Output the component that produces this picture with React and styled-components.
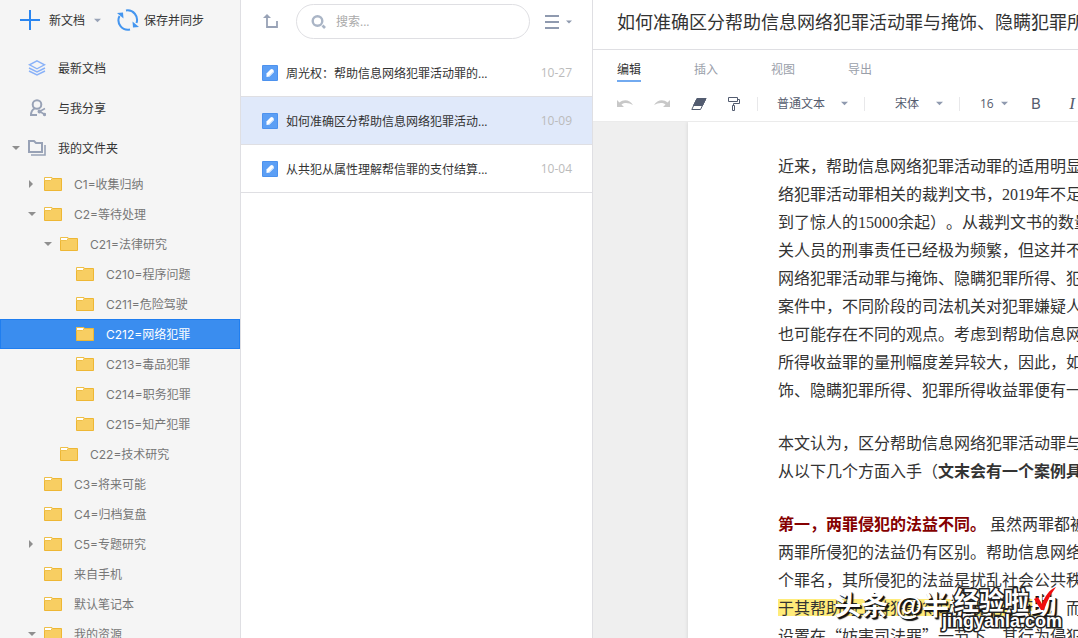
import { useState } from "react";
import styled, { createGlobalStyle } from "styled-components";

const GlobalStyle = createGlobalStyle`
    * {
        box-sizing: border-box;
    }

    body {
        margin: 0;
        color: #333;
        font-family: "Open Sans", "Noto Sans CJK SC", sans-serif;
        font-size: 12px;
    }

    button, input, select {
        margin: 0;
        padding: 0;
        border: none;
        background: none;
        color: inherit;
        font: inherit;
    }

    button {
        cursor: pointer;
    }

    svg {
        display: block;
        flex: none;
    }
`

const AppStyle = styled.div`
    display: grid;
    grid-template-columns: 240px 353px minmax(0, 1fr);
    height: 100vh;
    overflow: hidden;
`

const Sidebar = styled.aside`
    background: #f5f5f5;
    overflow: hidden;
`

const SideActions = styled.div`
    display: flex;
    align-items: center;
    gap: 16px;
    height: 40px;
    margin-bottom: 8px;
    padding-left: 20px;
`

const ActionButton = styled.button`
    display: flex;
    align-items: center;
    gap: ${({ $gap }) => $gap}px;
    white-space: nowrap;
`

const NavButton = styled.button`
    display: flex;
    align-items: center;
    width: 100%;
    height: 40px;
    padding-left: 12px;

    svg + span, span + span {
        margin-left: 12px;
    }
`

const CaretSlot = styled.span`
    display: flex;
    flex: none;
    width: 16px;
`

const Tree = styled.div`
    padding-top: 1px;
    font-family: Inter, "Noto Sans CJK SC", sans-serif;
`

const TreeButton = styled.button`
    display: flex;
    align-items: center;
    width: 100%;
    height: 30px;
    padding-left: ${({ $depth }) => 11 + $depth * 16}px;
    border: 1px solid ${({ $active }) => ($active ? "#1f7ef0" : "transparent")};
    background: ${({ $active }) => ($active ? "#3a8def" : "transparent")};
    color: ${({ $active }) => ($active ? "#fff" : "#777")};

    svg + span {
        margin-left: 12px;
        padding-bottom: 2px;
    }
`

const NotesPanel = styled.section`
    border-left: 1px solid #dfdfe3;
    border-right: 1px solid #dfdfe3;
    background: #fff;
`

const NotesHeader = styled.div`
    display: flex;
    align-items: center;
    height: 49px;
    padding: 0 20px 6px 22px;
`

const IconButton = styled.button`
    display: flex;
    align-items: center;
    gap: 7px;
`

const SearchBox = styled.label`
    display: flex;
    flex: 1;
    align-items: center;
    gap: 10px;
    height: 35px;
    margin: 0 15px 0 18px;
    padding: 0 14px;
    border: 1px solid #dfdfe3;
    border-radius: 18px;

    input {
        flex: 1;
        min-width: 0;
        outline: none;
    }

    input::placeholder {
        color: #aaa;
        opacity: 1;
    }
`

const NoteButton = styled.button`
    display: flex;
    align-items: center;
    width: 100%;
    height: 48px;
    padding: 0 20px 0 21px;
    border-bottom: 1px solid #dfdfe3;
    background: ${({ $active }) => ($active ? "#e0e9fa" : "#fff")};

    .note__title {
        flex: 1;
        margin-left: 8px;
        text-align: left;
        white-space: nowrap;
    }

    .note__date {
        color: #bbb;
    }
`

const Editor = styled.main`
    position: relative;
    display: flex;
    flex-direction: column;
    min-width: 0;
    overflow: hidden;
`

const DocTitle = styled.h1`
    flex: none;
    height: 50px;
    margin: 0;
    padding-left: 24px;
    border-bottom: 1px solid #dfdfe3;
    font-size: 18px;
    font-weight: 400;
    line-height: 44px;
    white-space: nowrap;
    overflow: hidden;
`

const Tabs = styled.div`
    display: flex;
    flex: none;
    gap: 53px;
    height: 36px;
    padding: 8px 0 4px 24px;
`

const Tab = styled.button`
    height: 24px;
    border-bottom: 2px solid ${({ $active }) => ($active ? "#72aaf0" : "transparent")};
    color: ${({ $active }) => ($active ? "#333" : "#9aa0aa")};
    white-space: nowrap;
`

const Toolbar = styled.div`
    display: flex;
    flex: none;
    align-items: center;
    height: 36px;
    padding-left: 24px;
    border-bottom: 1px solid #ebebeb;
    color: #555c6e;
`

const ToolGroup = styled.div`
    display: flex;
    flex: none;
    align-items: center;
    gap: 21px;
    margin-right: 16px;
`

const Divider = styled.span`
    flex: none;
    width: 1px;
    height: 14px;
    background: #e8e8ea;
`

const SelectBox = styled.label`
    display: flex;
    flex: none;
    align-items: center;
    margin: 0 ${({ $right = 16 }) => $right}px 0 ${({ $left }) => $left}px;

    select {
        width: ${({ $width }) => $width}px;
        appearance: none;
        outline: none;
    }
`

const FormatButton = styled.button`
    flex: none;
    width: 36px;
    font-family: ${({ $italic }) => ($italic ? '"Liberation Serif", serif' : "Inter, sans-serif")};
    font-size: ${({ $italic }) => ($italic ? 17 : 15)}px;
    font-style: ${({ $italic }) => ($italic ? "italic" : "normal")};
`

const Canvas = styled.div`
    flex: 1;
    padding-left: 95px;
    background: #efefef;
    overflow: hidden;
`

const Paper = styled.article`
    min-height: 100%;
    padding: 29px 0 0 90px;
    background: #fff;
    box-shadow: 0 0 4px rgba(0, 0, 0, 0.12);
    font-family: "Noto Sans CJK SC", sans-serif;
    font-size: 16px;
    line-height: 28px;
    white-space: nowrap;
    text-spacing-trim: space-all;

    p {
        margin: 0 0 25px;
    }

    mark {
        background: linear-gradient(#ffec7a, #ffec7a) center / 100% 17px no-repeat;
        color: inherit;
    }
`

const Digits = styled.span`
    font-family: "Liberation Serif", serif;
    line-height: 1;
`

const Heading = styled.strong`
    margin-right: 4px;
    color: #850000;
`

const Watermark = styled.div`
    position: absolute;
    right: ${({ $right }) => $right}px;
    bottom: ${({ $bottom }) => $bottom}px;
    color: #fff;
    font-family: "Liberation Sans", "Noto Sans CJK SC", sans-serif;
    font-size: ${({ $size }) => $size}px;
    font-weight: 700;
    line-height: 1;
    white-space: nowrap;
    pointer-events: none;
    -webkit-text-stroke: ${({ $shadow }) => ($shadow ? 0 : 3)}px #222;
    paint-order: stroke fill;
    text-shadow: ${({ $shadow }) => ($shadow ? "2px 2px 1px #111, 1px 1px 0 #111" : "none")};
`

const CheckMark = styled.svg`
    position: absolute;
    right: 21px;
    bottom: 27px;
`

const Caret = ({ color = "#8f8f8f", right, size = 8 }) => (
    <svg width={size} height={size} viewBox="0 0 8 8">
        <path d={right ? "M1 0L5 4L1 8Z" : "M0 2H8L4 6Z"} fill={color} />
    </svg>
)

const PlusIcon = () => (
    <svg width="20" height="20" viewBox="0 0 20 20">
        <path d="M10 0V20M0 10H20" stroke="#2b86f0" strokeWidth="2" />
    </svg>
)

const SyncIcon = () => (
    <svg width="22" height="22" viewBox="0 0 22 22" fill="none" stroke="#4596ef" strokeWidth="2">
        <path d="M9 1.5A9.5 9.5 0 0 1 19.5 14" />
        <path d="M2.5 7A9.5 9.5 0 0 0 13 20.5" />
        <path d="M0 4L6 3.500L6.500 9.500Z" fill="#4596ef" stroke="none" />
        <path d="M22 18L16 18.500L15.500 12.500Z" fill="#4596ef" stroke="none" />
    </svg>
)

const LayersIcon = () => (
    <svg width="18" height="16" viewBox="0 0 18 16" fill="none" stroke="#8ab2f8" strokeWidth="1.4">
        <path d="M9 0.800L16.500 4.800L9 8.800L1.500 4.800Z" />
        <path d="M1 8L9 12L17 8M1 11L9 15L17 11" />
    </svg>
)

const ShareIcon = () => (
    <svg width="18" height="18" viewBox="0 0 18 18" fill="none" stroke="#98a2b6" strokeWidth="2">
        <circle cx="9" cy="5.500" r="4.300" />
        <path d="M6.500 9.500C4 11 3 13 3 16H9" />
        <path d="M17 9.500L11.500 12.500L17 15.500" strokeWidth="1.5" />
        <circle cx="11.500" cy="12.500" r="1" />
        <circle cx="16.500" cy="15.500" r="0.700" />
    </svg>
)

const FoldersIcon = () => (
    <svg width="18" height="16" viewBox="0 0 18 16" fill="none" stroke="#98a2b6">
        <path d="M1 1H6L8 3H14V12H1Z" strokeWidth="2" />
        <path d="M17 5V15H3" strokeWidth="1.600" />
    </svg>
)

const FolderIcon = () => (
    <svg width="18" height="14" viewBox="0 0 18 14">
        <path d="M0.500 1.500H7.500L8.500 1.500H17.500V13.500H0.500Z" fill="#f8ce62" stroke="#eeb734" />
        <path d="M0.500 0.500H8V2L6.500 3.500H0.500Z" fill="#fff" stroke="#eec04a" />
    </svg>
)

const UpIcon = () => (
    <svg width="15" height="15" viewBox="0 0 15 15" fill="none" stroke="#98a2b6" strokeWidth="1.800">
        <path d="M4 2V13H14V7" />
        <path d="M0 4L4 0L8 4Z" fill="#98a2b6" stroke="none" />
    </svg>
)

const SearchIcon = () => (
    <svg width="15" height="14" viewBox="0 0 15 14" fill="none" stroke="#aab5c6">
        <circle cx="6.500" cy="6" r="4.800" strokeWidth="2.400" />
        <path d="M11.500 10.500L14 13" strokeWidth="2.600" />
    </svg>
)

const MenuIcon = () => (
    <svg width="14" height="14" viewBox="0 0 14 14" stroke="#8f9aaf" strokeWidth="2">
        <path d="M0 1H14M0 7H14M0 13H14" />
    </svg>
)

const NoteIcon = () => (
    <svg width="16" height="16" viewBox="0 0 16 16">
        <rect width="16" height="16" rx="1" fill="#4d92ee" />
        <rect x="1" y="1" width="14" height="14" fill="#5c9ff5" />
        <path d="M4.500 12L4.500 8.500L8.500 4.500Q9.500 3.500 11 4.500Q12.500 6 11.500 7.500L7.500 11.500Z" fill="#fff" />
        <path d="M7.500 11.500L11.500 7.500L11.500 6L6 11.700Z" fill="#c9e0fc" />
    </svg>
)

const UndoIcon = ({ flip }) => (
    <svg width="16" height="9" viewBox="0 0 16 9">
        <path
            d="M0 1V8H7L4.500 5.500C8 3 12 4 16 6C13 1 7 -0.500 2.500 3.500Z"
            fill="#c8c8c8"
            transform={flip ? "translate(16 0) scale(-1 1)" : undefined}
        />
    </svg>
)

const EraserIcon = () => (
    <svg width="16" height="12" viewBox="0 0 16 12" stroke="#535c70">
        <path d="M6 0.500H15L9.500 11.500H0.800Z" fill="#fff" />
        <path d="M6 0.500H15L11.500 7.500H2.500Z" fill="#535c70" />
    </svg>
)

const RollerIcon = () => (
    <svg width="13" height="14" viewBox="0 0 13 14" fill="none" stroke="#535c70">
        <path d="M0.500 0.500H9.500V4.500H0.500Z" />
        <path d="M9.500 2.500H11.500V6.500H5.500V8" />
        <path d="M4.500 8.500H6.500V13.500H4.500Z" />
    </svg>
)

const folders = [
    { name: "C1=收集归纳", depth: 1, caret: "right" },
    { name: "C2=等待处理", depth: 1, caret: "down" },
    { name: "C21=法律研究", depth: 2, caret: "down" },
    { name: "C210=程序问题", depth: 3 },
    { name: "C211=危险驾驶", depth: 3 },
    { name: "C212=网络犯罪", depth: 3 },
    { name: "C213=毒品犯罪", depth: 3 },
    { name: "C214=职务犯罪", depth: 3 },
    { name: "C215=知产犯罪", depth: 3 },
    { name: "C22=技术研究", depth: 2 },
    { name: "C3=将来可能", depth: 1 },
    { name: "C4=归档复盘", depth: 1 },
    { name: "C5=专题研究", depth: 1, caret: "right" },
    { name: "来自手机", depth: 1 },
    { name: "默认笔记本", depth: 1 },
    { name: "我的资源", depth: 1, caret: "down" },
]

const notes = [
    { title: "周光权：帮助信息网络犯罪活动罪的...", date: "10-27" },
    { title: "如何准确区分帮助信息网络犯罪活动...", date: "10-09" },
    { title: "从共犯从属性理解帮信罪的支付结算...", date: "10-04" },
]

const tabs = ["编辑", "插入", "视图", "导出"]

const App = () => {

    const [folder, setFolder] = useState("C212=网络犯罪")
    const [note, setNote] = useState(1)
    const [tab, setTab] = useState("编辑")

    return (
        <AppStyle>
            <GlobalStyle />

            <Sidebar>
                <SideActions>
                    <ActionButton $gap={9}>
                        <PlusIcon />
                        新文档
                        <Caret color="#98a2b6" size={7} />
                    </ActionButton>
                    <ActionButton $gap={5}>
                        <SyncIcon />
                        保存并同步
                    </ActionButton>
                </SideActions>

                <nav>
                    <NavButton><CaretSlot /><LayersIcon /><span>最新文档</span></NavButton>
                    <NavButton><CaretSlot /><ShareIcon /><span>与我分享</span></NavButton>
                    <NavButton><CaretSlot><Caret /></CaretSlot><FoldersIcon /><span>我的文件夹</span></NavButton>
                    <Tree>
                        {folders.map((item) => (
                            <TreeButton
                                key={item.name}
                                $depth={item.depth}
                                $active={item.name === folder}
                                onClick={() => setFolder(item.name)}
                            >
                                <CaretSlot>{item.caret ? <Caret right={item.caret === "right"} /> : null}</CaretSlot>
                                <FolderIcon />
                                <span>{item.name}</span>
                            </TreeButton>
                        ))}
                    </Tree>
                </nav>
            </Sidebar>

            <NotesPanel>
                <NotesHeader>
                    <IconButton aria-label="返回上级"><UpIcon /></IconButton>
                    <SearchBox>
                        <SearchIcon />
                        <input type="text" aria-label="搜索" placeholder="搜索..." />
                    </SearchBox>
                    <IconButton aria-label="排序"><MenuIcon /><Caret color="#8f9aaf" size={6} /></IconButton>
                </NotesHeader>
                {notes.map((item, i) => (
                    <NoteButton key={item.date} $active={i === note} onClick={() => setNote(i)}>
                        <NoteIcon />
                        <span className="note__title">{item.title}</span>
                        <span className="note__date">{item.date}</span>
                    </NoteButton>
                ))}
            </NotesPanel>

            <Editor>
                <DocTitle>如何准确区分帮助信息网络犯罪活动罪与掩饰、隐瞒犯罪所</DocTitle>
                <Tabs>
                    {tabs.map((name) => (
                        <Tab key={name} $active={name === tab} onClick={() => setTab(name)}>{name}</Tab>
                    ))}
                </Tabs>
                <Toolbar>
                    <ToolGroup>
                        <IconButton aria-label="撤销"><UndoIcon /></IconButton>
                        <IconButton aria-label="重做"><UndoIcon flip /></IconButton>
                        <IconButton aria-label="清除格式"><EraserIcon /></IconButton>
                        <IconButton aria-label="格式刷"><RollerIcon /></IconButton>
                    </ToolGroup>
                    <Divider />
                    <SelectBox $left={19} $width={64}>
                        <select aria-label="段落样式"><option>普通文本</option></select>
                        <Caret color="#8f9aaf" size={7} />
                    </SelectBox>
                    <Divider />
                    <SelectBox $left={30} $width={41}>
                        <select aria-label="字体"><option>宋体</option></select>
                        <Caret color="#8f9aaf" size={7} />
                    </SelectBox>
                    <Divider />
                    <SelectBox $left={20} $width={21} $right={10}>
                        <select aria-label="字号"><option>16</option></select>
                        <Caret color="#8f9aaf" size={7} />
                    </SelectBox>
                    <FormatButton>B</FormatButton>
                    <FormatButton $italic>I</FormatButton>
                </Toolbar>

                <Canvas>
                    <Paper>
                        <p>
                            近来，帮助信息网络犯罪活动罪的适用明显<br />
                            络犯罪活动罪相关的裁判文书，<Digits>2019</Digits>年不足<br />
                            到了惊人的<Digits>15000</Digits>余起）。从裁判文书的数量<br />
                            关人员的刑事责任已经极为频繁，但这并不<br />
                            网络犯罪活动罪与掩饰、隐瞒犯罪所得、犯<br />
                            案件中，不同阶段的司法机关对犯罪嫌疑人<br />
                            也可能存在不同的观点。考虑到帮助信息网<br />
                            所得收益罪的量刑幅度差异较大，因此，如<br />
                            饰、隐瞒犯罪所得、犯罪所得收益罪便有一
                        </p>
                        <p>
                            本文认为，区分帮助信息网络犯罪活动罪与<br />
                            从以下几个方面入手（<strong>文末会有一个案例具</strong>
                        </p>
                        <p>
                            <Heading>第一，两罪侵犯的法益不同。</Heading>虽然两罪都被<br />
                            两罪所侵犯的法益仍有区别。帮助信息网络<br />
                            个罪名，其所侵犯的法益是扰乱社会公共秩<br />
                            <mark>于其帮助的上游犯罪得以实现犯罪行为</mark>。而<br />
                            设置在“妨害司法罪”一节下，其行为侵犯
                        </p>
                    </Paper>
                </Canvas>

                <Watermark $right={21} $bottom={18} $size={27} $shadow>头条 @半糖学法助</Watermark>
                <Watermark $right={49} $bottom={24} $size={25}>经验啦</Watermark>
                <Watermark $right={16} $bottom={8} $size={18}>jingyanla.com</Watermark>
                <CheckMark width="24" height="24" viewBox="0 0 24 24">
                    <path d="M1 12L5 10L9 17C12 9 16 3 23 0C18 7 14 14 11 23H8Z" fill="#f00d0d" />
                </CheckMark>
            </Editor>
        </AppStyle>
    );
}

export default App;
